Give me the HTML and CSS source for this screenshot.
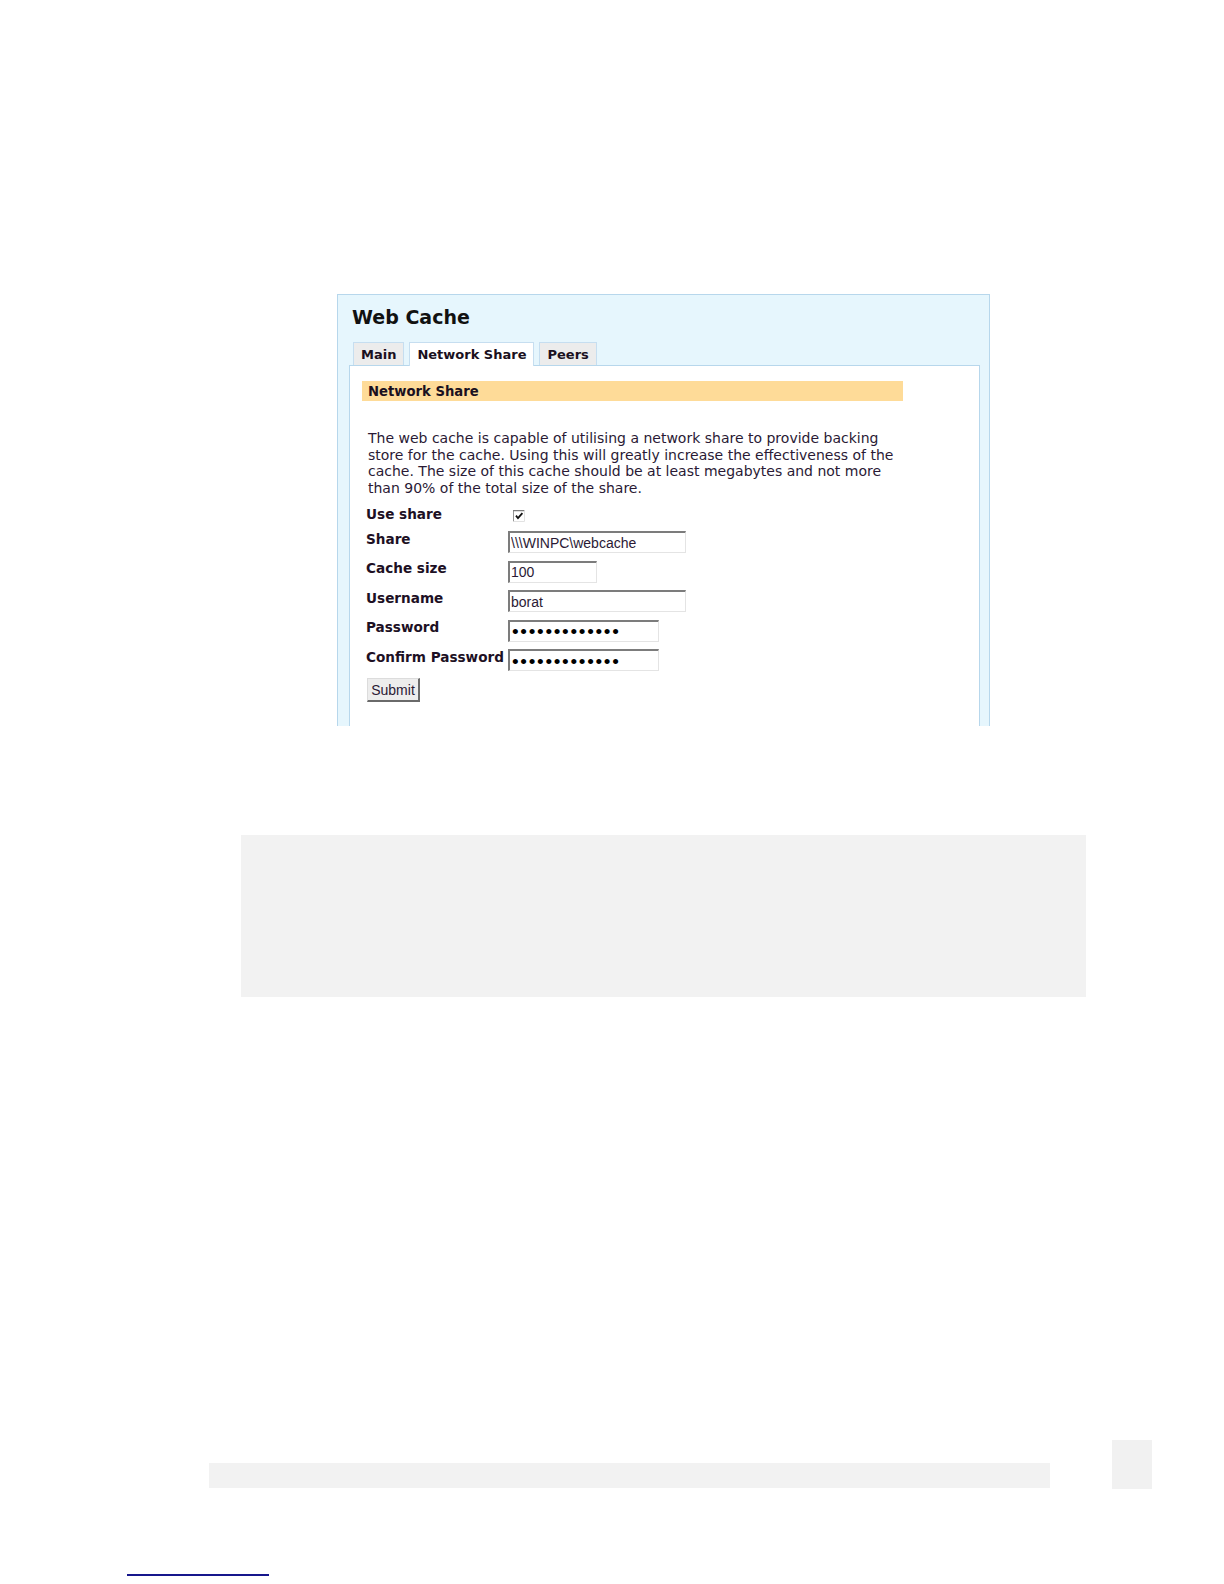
FILE: index.html
```html
<!DOCTYPE html>
<html lang="en">
<head>
<meta charset="utf-8">
<title>Web Cache - Network Share</title>
<link rel="stylesheet" href="styles.css">
</head>
<body>
<div class="page">
  <div class="shot">
    <h1 class="shot-title">Web Cache</h1>
    <div class="tabs">
      <span class="tab">Main</span>
      <span class="tab tab-active">Network Share</span>
      <span class="tab">Peers</span>
    </div>
    <div class="panel">
      <div class="section-head">Network Share</div>
      <p class="intro">The web cache is capable of utilising a network share to provide backing store for the cache. Using this will greatly increase the effectiveness of the cache. The size of this cache should be at least megabytes and not more than 90% of the total size of the share.</p>
      <form class="form">
        <label class="lbl">Use share</label>
        <span class="check">
          <svg width="12" height="12" viewBox="0 0 12 12" aria-hidden="true">
            <rect x="0" y="0" width="12" height="12" fill="#ffffff"/>
            <path d="M0 11.5 V0.5 H11.5" fill="none" stroke="#7c7c7c" stroke-width="1.6"/>
            <path d="M11.5 0.5 V11.5 H0.5" fill="none" stroke="#e2e2e2" stroke-width="1"/>
            <path d="M3 5.6 L5 8.2 L9.4 3.2" fill="none" stroke="#111111" stroke-width="1.8"/>
          </svg>
        </span>
        <label class="lbl">Share</label>
        <input class="fld fld-long" type="text" value="\\\WINPC\webcache">
        <label class="lbl">Cache size</label>
        <input class="fld fld-short" type="text" value="100">
        <label class="lbl">Username</label>
        <input class="fld fld-long" type="text" value="borat">
        <label class="lbl">Password</label>
        <input class="fld fld-mid fld-pw" type="password" value="xxxxxxxxxxxxx">
        <label class="lbl">Confirm Password</label>
        <input class="fld fld-mid fld-pw" type="password" value="xxxxxxxxxxxxx">
      </form>
      <button class="submit" type="button">Submit</button>
    </div>
  </div>

  <div class="gray-block"></div>

  <div class="footer-row">
    <div class="footer-bar"></div>
    <div class="footer-tab"></div>
  </div>

  <div class="footnote-rule"></div>
</div>
</body>
</html>
```

FILE: styles.css
```css
html, body {
  margin: 0;
  padding: 0;
  background: #ffffff;
}

.page {
  width: 1224px;
  height: 1584px;
  overflow: hidden;
  font-family: "DejaVu Sans", Verdana, sans-serif;
  color: #22152b;
}

/* ---------- embedded screenshot ---------- */
.shot {
  box-sizing: border-box;
  margin: 294px 0 0 337px;
  width: 653px;
  height: 432px;
  overflow: hidden;
  background: #e6f6fd;
  border: 1px solid #b7d7ec;
  border-bottom: none;
  padding: 11px 9px 0 11px;
}

.shot-title {
  margin: 0 0 0 3px;
  font-size: 19px;
  line-height: 22px;
  font-weight: bold;
  color: #111111;
}

.tabs {
  display: flex;
  align-items: flex-end;
  gap: 5px;
  margin: 14px 0 0 4px;
  height: 23px;
}

.tab {
  box-sizing: border-box;
  height: 23px;
  padding: 4px 7px 0;
  font-size: 13px;
  line-height: 16px;
  font-weight: bold;
  color: #1a1020;
  background: #ececec;
  border: 1px solid #c6def0;
  border-bottom: none;
}

.tab-active {
  height: 24px;
  margin-bottom: -1px;
  background: #ffffff;
}

.panel {
  box-sizing: border-box;
  width: 631px;
  height: 400px;
  background: #ffffff;
  border: 1px solid #b7d7ec;
  padding: 15px 0 0 12px;
}

.section-head {
  box-sizing: border-box;
  width: 541px;
  height: 20px;
  padding-left: 6px;
  font-size: 13.2px;
  line-height: 21px;
  font-weight: bold;
  color: #1a1020;
  background: #fedb98;
}

.intro {
  margin: 29px 0 0 6px;
  width: 536px;
  font-size: 14px;
  line-height: 16.7px;
  color: #2a1a35;
}

/* ---------- form ---------- */
.form {
  display: grid;
  grid-template-columns: 142px auto;
  grid-template-rows: 24.5px repeat(5, 29.5px);
  align-items: start;
  justify-items: start;
  margin: 8px 0 0 4px;
}

.lbl {
  margin-top: 1.5px;
  font-size: 13.6px;
  line-height: 16px;
  font-weight: bold;
  color: #1d1024;
}

.check {
  display: block;
  margin: 5.5px 0 0 5px;
  width: 12px;
  height: 12px;
}

.check svg {
  display: block;
}

.fld {
  box-sizing: border-box;
  margin: 2px 0 0;
  height: 22px;
  padding: 0 1px;
  font-family: "Liberation Sans", Arial, sans-serif;
  font-size: 14px;
  line-height: 19px;
  color: #2b1a35;
  background: #ffffff;
  border-style: solid;
  border-width: 2px 1px 1px 2px;
  border-color: #7c7c7c #e4e4e4 #e4e4e4 #7c7c7c;
  border-radius: 0;
  outline: none;
}

.fld-long { width: 178px; }
.fld-short { width: 89px; }
.fld-mid { width: 151px; }

.fld-pw {
  font-size: 19px;
  line-height: 18px;
  padding: 2px 0 0 2px;
  letter-spacing: 1.7px;
  color: #000000;
}

.submit {
  box-sizing: border-box;
  display: block;
  margin: 1.5px 0 0 5px;
  width: 53px;
  height: 24px;
  padding: 0;
  font-family: "Liberation Sans", Arial, sans-serif;
  font-size: 14px;
  color: #2b1a35;
  background: #ededed;
  border-style: solid;
  border-width: 1px 2px 2px 1px;
  border-color: #dcdcdc #6a6a6a #6a6a6a #dcdcdc;
  border-radius: 0;
}

/* ---------- page furniture ---------- */
.gray-block {
  margin: 109px 0 0 241px;
  width: 845px;
  height: 162px;
  background: #f2f2f2;
}

.footer-row {
  display: flex;
  align-items: flex-end;
  gap: 62px;
  margin: 443px 0 0 209px;
}

.footer-bar {
  width: 841px;
  height: 25px;
  margin-bottom: 1px;
  background: #f2f2f2;
}

.footer-tab {
  width: 40px;
  height: 49px;
  background: #f1f1f1;
}

.footnote-rule {
  margin: 85px 0 0 127px;
  width: 142px;
  height: 2px;
  background: #16168c;
}
```
